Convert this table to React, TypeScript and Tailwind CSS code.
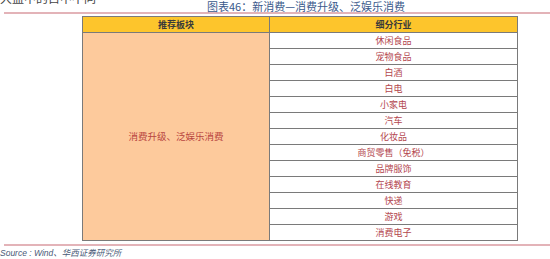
import React from "react";

const rows = [
  "休闲食品",
  "宠物食品",
  "白酒",
  "白电",
  "小家电",
  "汽车",
  "化妆品",
  "商贸零售（免税）",
  "品牌服饰",
  "在线教育",
  "快递",
  "游戏",
  "消费电子",
];

const cjk = { fontFamily: '"Noto Sans CJK SC", "Noto Sans", sans-serif' };

export default function App() {
  return (
    <div className="w-[550px] h-[259px] bg-white overflow-hidden flex flex-col" style={cjk}>
      <div className="h-[12px] flex items-end relative">
        <div className="absolute left-0 top-[-8px] text-[12px] leading-[12px] text-[#444]">大盘中的占中不同</div>
        <div className="ml-[207px] text-[11px] leading-[12px] text-[#3b5a8c] whitespace-nowrap">图表46：新消费—消费升级、泛娱乐消费</div>
      </div>
      <div className="ml-[4px] h-[2px] bg-[#e3b3b8]" />
      <div className="h-[2px]" />
      <div className="ml-[82px] w-[436px] border border-[#7a7a7a] flex flex-col">
        <div className="h-[16px] flex bg-[#fdc52c] border-b border-[#7a7a7a] text-[9px] font-bold text-[#3a3a3a]">
          <div className="w-[187px] border-r border-[#7a7a7a] flex items-center justify-center">推荐板块</div>
          <div className="flex-1 flex items-center justify-center">细分行业</div>
        </div>
        <div className="flex">
          <div className="w-[187px] bg-[#fdca9c] border-r border-[#7a7a7a] flex items-center justify-center text-[9.5px] text-[#b84440]">
            消费升级、泛娱乐消费
          </div>
          <div className="flex-1 flex flex-col">
            {rows.map((r, i) => (
              <div
                key={r}
                className={
                  i === rows.length - 1
                    ? "h-[15px] flex items-center justify-center text-[9px] text-[#b3464e]"
                    : "h-[16px] border-b border-[#7a7a7a] flex items-center justify-center text-[9px] text-[#b3464e]"
                }
              >
                {r}
              </div>
            ))}
          </div>
        </div>
      </div>
      <div className="ml-[4px] mt-[3px] h-[2px] bg-[#e3b3b8]" />
      <div className="mt-[1px] text-[8.5px] leading-[12px] italic text-[#4a5a78] whitespace-nowrap" style={{ fontFamily: '"Liberation Sans", "Noto Sans CJK SC", sans-serif' }}>
        Source : Wind、华西证券研究所
      </div>
    </div>
  );
}
